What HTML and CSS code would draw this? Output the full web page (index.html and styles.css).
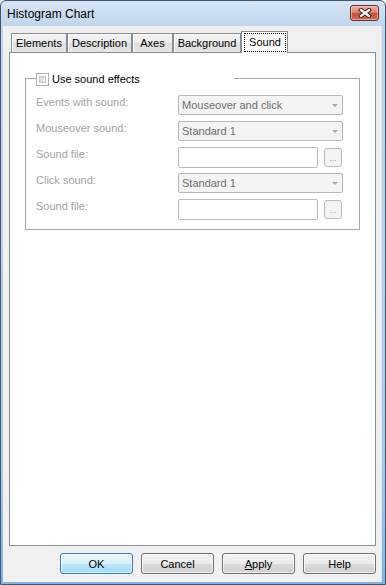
FILE: index.html
```html
<!DOCTYPE html>
<html lang="en">
<head>
  <meta charset="utf-8">
  <meta name="viewport" content="width=device-width, initial-scale=1">
  <title>Histogram Chart</title>
  <link rel="stylesheet" href="styles.css">
</head>
<body>

  <div class="window">
    <div class="titlebar">
      <span class="title">Histogram Chart</span>
      <button class="close-btn" title="Close">
        <svg width="14" height="10" viewBox="0 0 14 10">
          <path d="M3 2 L11 8 M11 2 L3 8" stroke="#4a2525" stroke-width="4.2" stroke-linecap="square" fill="none"/>
          <path d="M3 2 L11 8 M11 2 L3 8" stroke="#ffffff" stroke-width="2.2" stroke-linecap="square" fill="none"/>
        </svg>
      </button>
    </div>

    <div class="client">
      <div class="tabs">
        <div class="tab tab-elements">Elements</div>
        <div class="tab tab-description">Description</div>
        <div class="tab tab-axes">Axes</div>
        <div class="tab tab-background">Background</div>
        <div class="tab tab-sound active"><span class="focus">Sound</span></div>
      </div>

      <div class="pane">
        <div class="group">
          <div class="legend">
            <span class="checkbox"><span class="checkbox-inner"></span></span>
            <span class="legend-text">Use sound effects</span>
          </div>

          <div class="row">
            <label>Events with sound:</label>
            <div class="combo">Mouseover and click<span class="arrow"></span></div>
          </div>
          <div class="row">
            <label>Mouseover sound:</label>
            <div class="combo">Standard 1<span class="arrow"></span></div>
          </div>
          <div class="row">
            <label>Sound file:</label>
            <div class="textbox"></div>
            <div class="browse">...</div>
          </div>
          <div class="row">
            <label>Click sound:</label>
            <div class="combo">Standard 1<span class="arrow"></span></div>
          </div>
          <div class="row">
            <label>Sound file:</label>
            <div class="textbox"></div>
            <div class="browse">...</div>
          </div>
        </div>
      </div>

      <div class="buttons">
        <button class="btn default">OK</button>
        <button class="btn">Cancel</button>
        <button class="btn"><u>A</u>pply</button>
        <button class="btn">Help</button>
      </div>
    </div>
  </div>

</body>
</html>
```

FILE: styles.css
```css
html, body {
  margin: 0;
  padding: 0;
  background: #ffffff;
}
body {
  font-family: "Liberation Sans", Arial, sans-serif;
  font-size: 11px;
  color: #000;
}
.window {
  width: 386px;
  height: 585px;
  box-sizing: border-box;
  border: 1px solid #43566f;
  border-radius: 6px 6px 0 0;
  background: linear-gradient(#d6e4f3, #bed4ec 5%, #b9d1ea 40%, #a9c8e8 80%, #7fb4e2);
  display: flex;
  flex-direction: column;
  overflow: hidden;
}
.titlebar {
  height: 25px;
  display: flex;
  align-items: flex-start;
  flex-shrink: 0;
}
.title {
  flex: 1;
  font-size: 12px;
  line-height: 14px;
  padding: 6px 0 0 6px;
}
.close-btn {
  width: 29px;
  height: 16px;
  margin: 4px 6px 0 0;
  padding: 0;
  border: 1px solid #6b2a2a;
  border-radius: 3px;
  background: linear-gradient(#eab0a3, #d88a79 45%, #c5513b 50%, #cf6a54);
  box-shadow: inset 0 0 0 1px rgba(255, 220, 210, 0.55);
  display: flex;
  align-items: center;
  justify-content: center;
}
.close-btn svg {
  display: block;
}
.client {
  flex: 1;
  margin: 0 3px 2px 2px;
  border-right: 1px solid #dde8f4;
  background: #f0f0f0;
  display: flex;
  flex-direction: column;
  padding-top: 5px;
}
.tabs {
  display: flex;
  align-items: flex-end;
  margin-left: 8px;
  position: relative;
  z-index: 1;
}
.tab {
  box-sizing: border-box;
  height: 19px;
  border: 1px solid #898c95;
  border-bottom: none;
  background: linear-gradient(#f4f4f4, #ececec 50%, #dedede 51%, #e6e6e6);
  box-shadow: inset 1px 1px 0 #fbfbfb;
  text-align: center;
  line-height: 18px;
  white-space: nowrap;
}
.tab-elements { width: 56px; }
.tab-description { width: 65px; }
.tab-axes { width: 41px; }
.tab-background { width: 68px; }
.tab-sound { width: 47px; }
.tab.active {
  height: 22px;
  margin-bottom: -1px;
  padding: 1px 1px 0 2px;
  background: #fff;
  box-shadow: none;
  text-align: left;
}
.tab.active .focus {
  display: block;
  border: 1px dotted #000;
  line-height: 17px;
  text-align: center;
}
.pane {
  flex: 1;
  margin: 0 5px 0 6px;
  border: 1px solid #898c95;
  background: #fff;
}
.group {
  position: relative;
  box-sizing: border-box;
  width: 335px;
  margin: 25px 0 0 15px;
  padding: 16px 0 10px 10px;
  border: 1px solid #a7a7a7;
  display: flex;
  flex-direction: column;
  gap: 6px;
}
.legend {
  position: absolute;
  top: -6px;
  left: 10px;
  width: 198px;
  height: 13px;
  background: #fff;
  display: flex;
  align-items: flex-start;
}
.checkbox {
  box-sizing: border-box;
  width: 13px;
  height: 13px;
  border: 1px solid #b1b1b1;
  background: #fff;
  padding: 2px;
}
.checkbox-inner {
  display: block;
  box-sizing: border-box;
  width: 7px;
  height: 7px;
  border: 1px solid #c9c9c9;
  background: linear-gradient(135deg, #d4d4d4, #eeeeee);
}
.legend-text {
  line-height: 13px;
  margin-left: 3px;
}
.row {
  display: flex;
  height: 20px;
}
.row label {
  width: 142px;
  flex-shrink: 0;
  color: #a3a3a3;
  line-height: 15px;
}
.combo {
  box-sizing: border-box;
  width: 165px;
  height: 20px;
  border: 1px solid #b4b8bb;
  border-radius: 2px;
  background: #f4f4f4;
  color: #6d6d6d;
  padding: 0 4px 0 3px;
  line-height: 18px;
  display: flex;
  align-items: center;
  justify-content: space-between;
}
.arrow {
  width: 0;
  height: 0;
  border-top: 3px solid #a6a6a6;
  border-left: 3px solid transparent;
  border-right: 3px solid transparent;
  margin-top: 1px;
}
.textbox {
  box-sizing: border-box;
  width: 140px;
  height: 21px;
  border: 1px solid #bcbcbc;
  border-radius: 2px;
  background: #fff;
}
.browse {
  box-sizing: border-box;
  width: 18px;
  height: 19px;
  margin: 1px 0 0 6px;
  border: 1px solid #b9b9b9;
  border-radius: 3px;
  background: #f4f4f4;
  color: #a3a3a3;
  font-size: 9px;
  line-height: 19px;
  text-align: center;
}
.buttons {
  display: flex;
  justify-content: flex-end;
  gap: 8px;
  margin: 7px 5px 8px 0;
}
.btn {
  box-sizing: border-box;
  width: 73px;
  height: 21px;
  padding: 0;
  border: 1px solid #707070;
  border-radius: 3px;
  background: linear-gradient(#f2f2f2, #ebebeb 50%, #dddddd 51%, #cfcfcf);
  box-shadow: inset 0 0 0 1px rgba(255, 255, 255, 0.7);
  font-family: "Liberation Sans", Arial, sans-serif;
  font-size: 11px;
  color: #000;
}
.btn.default {
  border-color: #3c7fb1;
  background: linear-gradient(#eaf6fd, #d9f0fc 50%, #bee6fd 51%, #a7d9f5);
  box-shadow: inset 0 0 0 1px rgba(255, 255, 255, 0.6);
}
```
